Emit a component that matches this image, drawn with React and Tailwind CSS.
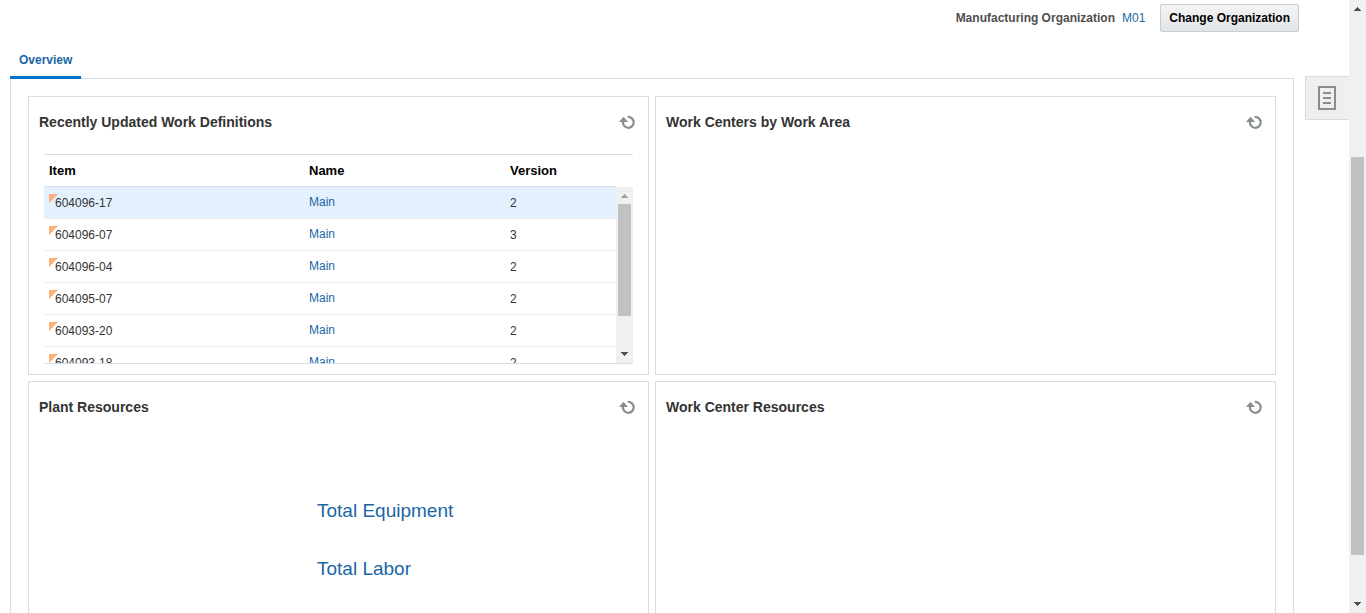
const rows = [
  { item: "604096-17", name: "Main", version: 2, selected: true },
  { item: "604096-07", name: "Main", version: 3 },
  { item: "604096-04", name: "Main", version: 2 },
  { item: "604095-07", name: "Main", version: 2 },
  { item: "604093-20", name: "Main", version: 2 },
  { item: "604093-18", name: "Main", version: 2 },
];

function RefreshIcon() {
  return (
    <svg width="16" height="16" viewBox="0 0 16 16" aria-hidden="true">
      <path d="M8.8 3A5.4 5.4 0 1 1 4 7.4" fill="none" stroke="#878d91" strokeWidth="2.2" />
      <path d="M0 8 4.5 2.8 9 8Z" fill="#878d91" />
    </svg>
  );
}

function Arrow({ up, faded }) {
  return (
    <svg width="17" height="17" viewBox="0 0 17 17" className="shrink-0" aria-hidden="true">
      <path
        d={up ? "M5 11h7v-1h-1V9h-1V8H9V7H8v1H7v1H6v1H5z" : "M5 6h7v1h-1v1h-1v1H9v1H8V9H7V8H6V7H5z"}
        fill={faded ? "#a3a3a3" : "#505050"}
      />
    </svg>
  );
}

function Card({ title, children }) {
  return (
    <section className="h-[279px] border border-[#d6dfe6] bg-white">
      <header className="flex items-center justify-between pt-4 pr-[13px] pl-[10px]">
        <h2 className="text-sm leading-[18px] font-bold text-[#333]">{title}</h2>
        <button type="button" aria-label={`Refresh ${title}`}>
          <RefreshIcon />
        </button>
      </header>
      {children}
    </section>
  );
}

function WorkDefinitions() {
  return (
    <div className="mt-[23px] mr-[15px] ml-[15px] flex h-[210px] overflow-hidden border-y border-[#d6dfe6]">
      <div className="flex-1 overflow-hidden">
        <table className="w-full table-fixed border-separate border-spacing-0 text-left text-xs text-[#333]">
          <thead>
            <tr className="h-8 text-[13px] text-black">
              <th className="w-[260px] border-b border-[#d6dfe6] px-[5px] py-0">Item</th>
              <th className="w-[201px] border-b border-[#d6dfe6] px-[5px] py-0">Name</th>
              <th className="border-b border-[#d6dfe6] px-[5px] py-0">Version</th>
            </tr>
          </thead>
          <tbody>
            {rows.map((r) => (
              <tr key={r.item} className={r.selected ? "h-8 bg-[#e3f1fe]" : "h-8"}>
                <td className="border-b border-[#ebedee] px-[5px] py-0">
                  <div className="flex h-[18px]">
                    <svg width="9" height="9" viewBox="0 0 9 9" className="-mr-[3px] shrink-0" aria-hidden="true">
                      <path d="M0 0h9L0 9z" fill="#fab07c" />
                    </svg>
                    <span className="leading-[18px]">{r.item}</span>
                  </div>
                </td>
                <td className="border-b border-[#ebedee] px-[5px] pt-0 pb-[2px]">
                  <a href="#main" className="text-[#1b66a5]">{r.name}</a>
                </td>
                <td className="border-b border-[#ebedee] px-[5px] py-0">{r.version}</td>
              </tr>
            ))}
          </tbody>
        </table>
      </div>
      <div className="flex pt-8">
        <div className="flex w-[17px] flex-col bg-[#f0f0f0]">
          <Arrow up faded />
          <div className="mx-[2px] grow-[112] basis-0 bg-[#c1c1c1]" />
          <div className="grow-[30] basis-0" />
          <Arrow />
        </div>
      </div>
    </div>
  );
}

export default function App() {
  return (
    <div className="flex h-screen overflow-hidden bg-white font-['Liberation_Sans',Arial,sans-serif] text-xs">
      <main className="min-w-0 flex-1 overflow-hidden">
        <div className="flex items-center justify-end pt-1 pr-[50px]">
          <span className="font-bold text-[#4f4f4f]">Manufacturing Organization</span>
          <a href="#m01" className="ml-[7px] text-[#1b66a5]">M01</a>
          <button
            type="button"
            className="ml-[15px] h-7 rounded-xs border border-[#c4ced7] bg-linear-to-b from-[#f3f4f5] to-[#e2e5e8] px-2 font-bold text-black"
          >
            Change Organization
          </button>
        </div>
        <div className="flex items-start pt-[10px] pl-[10px]">
          <div className="min-w-0 flex-1">
            <nav className="flex">
              <a
                href="#overview"
                className="relative z-10 -mb-px flex h-[37px] items-center border-b-3 border-[#0572ce] px-[9px] pt-[1px] font-bold text-[#1b66a5]"
              >
                Overview
              </a>
            </nav>
            <div className="border border-[#d6dfe6] p-[17px]">
              <div className="grid grid-cols-2 gap-[6px]">
                <Card title="Recently Updated Work Definitions">
                  <WorkDefinitions />
                </Card>
                <Card title="Work Centers by Work Area" />
                <Card title="Plant Resources">
                  <div className="flex flex-col gap-[34px] pt-[83px] pl-[288px] text-[19px] leading-6">
                    <a href="#equipment" className="text-[#1b66a5]">Total Equipment</a>
                    <a href="#labor" className="text-[#1b66a5]">Total Labor</a>
                  </div>
                </Card>
                <Card title="Work Center Resources" />
              </div>
            </div>
          </div>
          <button
            type="button"
            aria-label="Open panel"
            className="mt-[34px] ml-[11px] flex h-11 w-11 items-center border border-r-0 border-[#d6dce1] bg-[#efefef] pl-3"
          >
            <svg width="18" height="24" viewBox="0 0 18 24" aria-hidden="true">
              <path d="M1 1h16v22H1z" fill="none" stroke="#878d91" strokeWidth="2" />
              <path d="M5 7h8M5 12h8M5 17h8" stroke="#878d91" strokeWidth="2" />
            </svg>
          </button>
        </div>
      </main>
      <div className="flex w-[17px] shrink-0 flex-col bg-[#f0f0f0]">
        <Arrow up />
        <div className="grow-[140] basis-0" />
        <div className="mx-[2px] grow-[398] basis-0 bg-[#c1c1c1]" />
        <div className="grow-[41] basis-0" />
        <Arrow />
      </div>
    </div>
  );
}
